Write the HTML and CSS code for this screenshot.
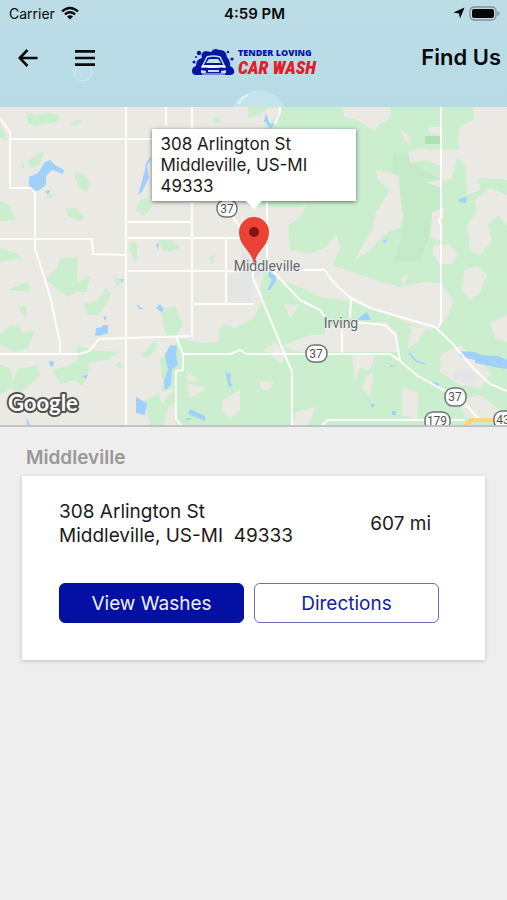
FILE: index.html
```html
<!DOCTYPE html>
<html lang="en">
<head>
<meta charset="utf-8">
<meta name="viewport" content="width=device-width, initial-scale=1">
<title>Find Us</title>
<link rel="stylesheet" href="styles.css">
</head>
<body>
<header class="top">
  <svg class="bubbles" viewBox="0 0 507 107" preserveAspectRatio="xMidYMax slice" aria-hidden="true">
    <circle cx="83" cy="72" r="9" fill="#ffffff" fill-opacity=".08" stroke="#e3f4f8" stroke-opacity=".6"/>
    <circle cx="259" cy="119" r="28" fill="#e3f6f8" fill-opacity=".3" stroke="#e8f8fa" stroke-opacity=".3"/>
    <path d="M239 104q2-7 9-9" fill="none" stroke="#f2fcfc" stroke-width="2" stroke-opacity=".6"/>
  </svg>
  <div class="status">
    <div class="carrier">
      <span>Carrier</span>
      <svg width="18" height="14" viewBox="0 0 18 14" aria-hidden="true">
        <g fill="none" stroke="#07090a" stroke-width="2.4"><path d="M1 5.4Q9-1.6 17 5.4"/><path d="M3.9 8.4Q9 4.2 14.1 8.4"/></g>
        <path d="M6 10.6Q9 8 12 10.6L9 13.6Z" fill="#07090a"/>
      </svg>
    </div>
    <time class="time">4:59 PM</time>
    <div class="power">
      <svg width="12" height="12" viewBox="0 0 12 12" aria-hidden="true"><path d="M11.6.4L7 11.6L6 6.4L.4 5.6Z" fill="#07090a"/></svg>
      <svg width="31" height="15" viewBox="0 0 31 15" aria-hidden="true">
        <rect x="1" y="1" width="26" height="13" rx="4" fill="none" stroke="#7e9299" stroke-width="1.3"/>
        <rect x="3" y="3" width="22" height="9" rx="2" fill="#050607"/>
        <path d="M28.4 5v5q2-1 2-2.500t-2-2.500z" fill="#7e9299"/>
      </svg>
    </div>
  </div>
  <nav class="bar">
    <div class="actions">
      <button class="icon" type="button" aria-label="Back">
        <svg width="20" height="18" viewBox="0 0 20 18"><path d="M9.500 1L1.700 9L9.500 17M2 9H19.500" fill="none" stroke="#080a0b" stroke-width="2.600"/></svg>
      </button>
      <button class="icon" type="button" aria-label="Menu">
        <svg width="20" height="18" viewBox="0 0 20 18"><path d="M0 2.300H20M0 9H20M0 15.700H20" stroke="#080a0b" stroke-width="2.700"/></svg>
      </button>
    </div>
    <div class="logo">
      <svg width="44" height="28" viewBox="0 0 44 28" aria-hidden="true">
        <path d="M5 27Q1 27 1 23Q1 19 5 18Q5 11 11 10Q9 4 15 3Q20 4 20 4Q23-1 28 2Q35 1 36 9Q40 13 39 18Q44 20 43 25Q42 27 39 27Z" fill="#0714a4"/>
        <g fill="#0714a4"><circle cx="8" cy="5" r="2.200"/><circle cx="3" cy="14" r="1.500"/><circle cx="5" cy="9" r="1"/><circle cx="37" cy="4" r="1.200"/><circle cx="41" cy="11" r="1.600"/></g>
        <path d="M12 17L16 9Q22 7 29 9L33 17" fill="none" stroke="#bfe0ea" stroke-width="1.500"/>
        <path d="M15 15L18 11H27L30 15Z" fill="#c3e2ec"/>
        <path d="M11 17H34L35 20Q29 19 27 20H18Q15 19 10 20Z" fill="#eef6fb"/>
        <path d="M10 22L15 23V25H10ZM35 22L30 23V25H35ZM17 22H28V24H17Z" fill="#c3e2ec"/>
        <path d="M11 26H34" stroke="#e8f4fa" stroke-width="1"/>
      </svg>
      <div class="brand"><span class="brand-top">TENDER LOVING</span><span class="brand-main">CAR WASH</span></div>
    </div>
    <h1 class="title">Find Us</h1>
  </nav>
</header>
<main>
  <section class="map" aria-label="Map">
    <svg class="tiles" viewBox="0 107 507 318" preserveAspectRatio="xMidYMid slice">
      <rect x="0" y="107" width="507" height="318" fill="#ebe9e4"/>
      <g fill="#cbeecf">
        <path d="M26 112L36 115L50 113L60 115L57 122L44 124L36 126L28 123ZM70 124L78 120L82 121L75 126ZM20 160L25 164L23 170ZM28 161L40 153L44 152L39 165L30 168ZM73 172L84 174L91 184L86 192L79 188ZM0 201L8 204L16 220L0 221ZM66 209L75 208L85 218L80 221L68 216ZM0 248L18 254L22 258L0 262ZM0 124L7 140L0 138Z"/>
        <path d="M46 279L57 268L60 258L78 257L77 283L91 275L86 292L75 292L68 297L58 290ZM42 199L56 193L52 198ZM140 200L149 198L152 207L144 216L136 210ZM130 243L137 242L137 263L129 250ZM158 240L170 240L181 247L170 252L162 250ZM209 258L215 254L213 264ZM213 119L217 117L223 121L213 124Z"/>
        <path d="M8 290L28 281L30 292ZM17 306L26 305L26 318ZM0 335L10 325L20 326L22 333L35 330L28 348L15 352L0 345ZM83 304L95 302L103 293L106 288L111 293L107 303L98 315L88 315ZM114 277L122 280L117 287ZM76 345L90 350L120 352L108 360L90 362L88 375L82 386L75 380L60 384L53 370L70 365L78 360ZM0 365L10 368L13 380L18 369L38 365L40 375L30 385L20 393L10 388L0 395ZM114 366L120 361L124 368ZM161 310L175 306L180 318L183 325L175 337L166 336ZM141 356L155 340L157 348L148 358Z"/>
        <path d="M180 339L205 343L219 342L218 330L225 324L235 328L254 318L262 300L258 265L242 233L248 205L248 107H507V425H150L145 400L160 393L163 382L160 360L168 350Z"/>
      </g>
      <g fill="#c4eac8"><path d="M393 155L408 153L412 163L441 180L440 215L432 230L420 262H393L401 240L404 220L400 190L393 172Z"/><path d="M425 136H440V144H425Z" fill="#b1dfb4"/></g>
      <g fill="#ebe9e4">
        <path d="M248 118L260 115L268 108H282L273 120L260 130L248 129ZM343 107H390V118L378 125L375 131L355 119L344 117ZM400 128L409 136L410 145L404 139Z"/>
        <path d="M473 107H507V180L478 178L480 190L467 195L466 165L457 158L452 178L443 182L441 166L425 160L410 163L408 152L420 148L430 150L441 149L460 150L458 143L460 126L474 120ZM428 127H441V136L429 133Z"/>
        <path d="M376 170L390 173L399 175L400 195L403 215L400 227L385 234L370 250L355 260L363 245L372 230L376 212L390 190L378 180ZM425 182L440 180V187ZM432 212L445 207L442 225L443 240L430 238ZM475 200L490 188L507 195V225L498 215L488 225L492 240L480 255L470 250L467 225L477 212ZM433 245L450 245L458 255L452 264H440L433 255Z"/>
        <path d="M242 207H267L300 207L306 205L300 218L288 225L290 250L310 254L326 247L336 235L341 247L332 265L378 281L400 287L425 282L440 283L453 300L450 312L443 323L430 330L405 322L390 315L345 300L320 297L300 287L280 280L265 270L254 310L242 260Z"/>
        <path d="M325 325L385 322L397 332L398 352H300L282 346L310 335L325 335ZM464 270L478 266L487 275L480 293L470 300L462 290ZM490 323L507 315V342L495 338ZM441 355L460 345L480 360L491 374L480 388L460 385L440 372ZM402 388L418 392L417 420L402 415ZM365 377L373 372L371 397L362 388ZM260 380L274 383L268 391L260 388ZM460 400L480 395L500 410L495 420L465 418ZM352 353L375 355L370 370L360 368L355 383ZM284 304L299 306L290 318ZM409 326L427 329L416 340ZM296 412L316 407L308 425H292ZM222 400L240 390V410L230 419L222 410ZM187 383L207 388L190 398ZM186 370L199 382L188 381ZM175 389L162 403L158 391ZM168 407L176 403V425H163ZM264 350L275 343L287 353L282 363ZM401 279L409 274L403 286ZM410 333L421 340L408 348Z"/>
      </g>
      <path fill="#e4e5e5" d="M242 239H267V270L254 280L240 275ZM453 370L470 369L480 378L471 384L454 380ZM228 274H252V303H228Z"/>
      <g fill="#a0d1fb">
        <path d="M29 177L38 173L45 162L50 160L55 165L64 170L63 174L52 170L46 176L46 185L38 191L29 189ZM45 191L50 190L48 195ZM151 156L146 163L144 174L138 195L142 192L149 178L147 165L151 160ZM156 244L159 243L158 250ZM266 113L270 124L275 123L271 129L264 121ZM459 199L467 197L466 203L458 202ZM382 241L388 239L385 243Z"/>
        <path d="M170 345L177 346L176 355L178 365L172 370L171 385L165 390L164 380L168 370L165 355ZM136 397L147 403L145 415L136 413ZM96 328L102 327L103 325H108V333L99 336L95 335ZM103 316L107 317L105 321ZM137 304L143 309H139ZM156 308L160 304L164 309L161 312ZM49 361L54 361L53 367L50 366ZM82 376L88 375L86 379ZM26 417L30 425H27ZM225 372L231 374L230 382L233 385L229 387L227 379ZM190 409L205 416V421L188 414ZM187 418L193 418L185 421ZM120 279L124 279L122 283ZM269 271L276 276V281L270 290H267L272 280L268 276ZM361 316L367 312L371 320H357ZM458 351L475 352L481 355L498 356L507 360V369L495 367L475 363V360L461 357ZM432 381L440 384L437 387ZM390 365L396 366L390 367ZM371 404L374 404V407H371ZM392 411H396V415H392Z"/>
      </g>
      <path d="M409 353L416 361L425 364" fill="none" stroke="#a0d1fb" stroke-width="1.500"/>
      <g class="roads">
        <path d="M126 107V425M166 107V125M192 107V336L99 339L89 351L80 354H0M10 139H155M0 118L10 132V188H31L35 193V250L42 270L51 300L54 315L60 342V354M0 239H92L93 254L126 255M126 222H192M126 238H240M226 238V304M128 271H240M193 304H254M176 337L183 354V370L176 371V419L181 425M183 354H230L240 350L247 354H390L400 361L418 376L445 391L465 404L480 420M232 216L253 245V278L283 350L292 372V425M267 200V270M270 268L300 300L320 310L327 320M268 270H325L333 282L348 296L370 308L435 327L452 343L475 370L490 384L507 391M351 298L350 318M342 330V353M355 322L385 325L396 336L400 361M441 107V217L439 220L441 225V322L438 328M322 425L328 420H465M280 107V112L275 124"/>
        <path class="highway" d="M465 426L471 420H496"/>
      </g>
      <g class="places"><text x="267" y="271">Middleville</text><text x="341" y="328">Irving</text></g>
      <g class="shields">
        <rect x="217" y="200" width="20" height="17" rx="8"/><text x="227" y="213">37</text>
        <rect x="306" y="345" width="21" height="17" rx="8"/><text x="316" y="358">37</text>
        <rect x="445" y="388" width="21" height="18" rx="8"/><text x="455" y="401">37</text>
        <rect x="425" y="412" width="25" height="18" rx="8"/><text x="437" y="425">179</text>
        <rect x="494" y="411" width="25" height="18" rx="8"/><text x="503" y="424">43</text>
      </g>
      <path d="M254 265C252 250 239 247 239 232A15 15 0 0 1 269 232C269 247 256 250 254 265Z" fill="#ea4335"/>
      <circle cx="254" cy="232" r="5" fill="#811411"/>
      <text class="google" x="8" y="411">Google</text>
    </svg>
    <div class="callout">308 Arlington St<br>Middleville, US-MI<br>49333</div>
  </section>
  <section class="places-list">
    <h2 class="city">Middleville</h2>
    <article class="card">
      <div class="info">
        <address class="address">308 Arlington St<br>Middleville, US-MI&nbsp; 49333</address>
        <span class="distance">607 mi</span>
      </div>
      <div class="buttons">
        <button class="btn primary" type="button">View Washes</button>
        <button class="btn" type="button">Directions</button>
      </div>
    </article>
  </section>
</main>
</body>
</html>
```
FILE: styles.css
```css
* { box-sizing: border-box; }
body {
  margin: 0;
  min-height: 100vh;
  background: #eeeeee;
  color: #1b1b1b;
  font-family: Inter, "Liberation Sans", sans-serif;
}
.top {
  position: relative;
  padding-bottom: 17px;
  overflow: hidden;
  background: linear-gradient(#bddde6, #b7dbe6);
  color: #080a0b;
}
.bubbles { position: absolute; inset: 0; width: 100%; height: 100%; }
.status {
  position: relative;
  display: grid;
  grid-template-columns: 1fr auto 1fr;
  align-items: center;
  height: 26px;
  padding: 0 7px 0 9px;
  font-size: 14px;
}
.carrier, .power { display: flex; align-items: center; gap: 6px; }
.power { justify-content: flex-end; gap: 4px; }
.time { font-size: 15px; font-weight: 600; }
.bar {
  position: relative;
  display: grid;
  grid-template-columns: 1fr auto 1fr;
  align-items: center;
  height: 64px;
  padding: 0 6px 0 18px;
}
.actions { display: flex; gap: 37px; }
.icon { display: flex; padding: 0; border: 0; background: none; }
.logo { display: flex; align-items: center; gap: 3px; margin-right: 12px; padding-top: 8px; }
.brand { display: flex; flex-direction: column; white-space: nowrap; }
.brand-top { color: #0714a4; font: 800 9px/12px "Open Sans", sans-serif; }
.brand-main { color: #e51b2c; font: italic 900 18px/18px "Roboto Condensed", "Liberation Sans Narrow", sans-serif; }
.title { margin: 0; padding-bottom: 2px; font-size: 22px; line-height: 28px; font-weight: 600; text-align: right; }
.map {
  position: relative;
  aspect-ratio: 507 / 320;
  overflow: hidden;
  border-bottom: 2px solid #c3c3c3;
}
.tiles { display: block; width: 100%; height: 100%; }
.roads { fill: none; stroke: #fdfdfa; stroke-width: 2; stroke-linejoin: round; }
.highway { stroke: #f7d878; stroke-width: 4; }
.places { fill: #62676c; stroke: #f4f4f0; stroke-width: 1px; paint-order: stroke; font: 14px Roboto, sans-serif; text-anchor: middle; }
.shields rect { fill: #ffffff; stroke: #707477; stroke-width: 1.5px; }
.shields text { fill: #505457; font: 12px Roboto, sans-serif; text-anchor: middle; }
.google { fill: #ffffff; stroke: #515151; stroke-width: 4px; stroke-linejoin: round; paint-order: stroke; font: 700 22px Lato, sans-serif; }
.callout {
  position: absolute;
  top: 7%;
  left: 50%;
  width: 204px;
  padding: 5px 9px 4px;
  transform: translateX(-50%);
  background: #ffffff;
  box-shadow: 0 1px 4px rgba(0, 0, 0, .55);
  font-size: 17px;
  line-height: 21px;
}
.callout::after {
  content: "";
  position: absolute;
  top: 100%;
  left: 50%;
  border: 8px solid transparent;
  border-top-color: #ffffff;
  border-bottom: 0;
  transform: translateX(-50%);
}
.places-list { padding: 18px 22px 24px; }
.city { margin: 0 0 5px 4px; color: #999999; font-size: 19px; line-height: 26px; font-weight: 600; }
.card {
  padding: 24px 46px 37px 37px;
  background: #ffffff;
  box-shadow: 0 1px 4px rgba(0, 0, 0, .2);
}
.info { display: flex; align-items: center; justify-content: space-between; padding-right: 8px; font-size: 19px; line-height: 24px; }
.address { font-style: normal; }
.distance { white-space: nowrap; }
.buttons { display: grid; grid-template-columns: 1fr 1fr; gap: 10px; margin-top: 35px; }
.btn {
  height: 40px;
  padding: 2px 0 0;
  border: 1px solid #6670c5;
  border-radius: 6px;
  background: #ffffff;
  color: #1721a0;
  font: 19px/24px Inter, sans-serif;
}
.btn.primary { background: #0410a3; border-color: #0410a3; color: #eef0ff; }
```
